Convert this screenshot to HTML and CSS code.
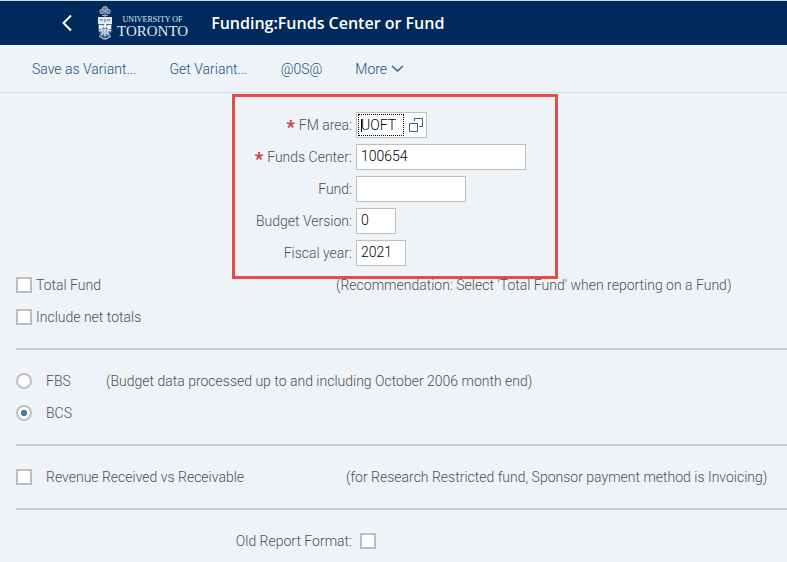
FILE: index.html
```html
<!DOCTYPE html>
<html lang="en">
<head>
<meta charset="utf-8">
<title>Funding:Funds Center or Fund</title>
<link rel="stylesheet" href="styles.css">
</head>
<body>
<header class="shell">
  <button class="back" type="button" aria-label="Back">
    <svg width="10" height="16" viewBox="0 0 10 16"><path d="M9 .5 1.500 8 9 15.500" fill="none" stroke="#fff" stroke-width="2"/></svg>
  </button>
  <a class="logo" href="#">
    <svg class="crest" width="16" height="34" viewBox="0 0 16 34">
      <g fill="#5d7ba0" stroke="#9fb2cb" stroke-width="1">
        <circle cx="8" cy="3" r="2.500"/><circle cx="5" cy="5.500" r="2.200"/><circle cx="11" cy="5.500" r="2.200"/>
        <path d="M8 4v7M5 9.500h6"/>
      </g>
      <path d="M1 11h14v7H1z" fill="#dfe7f0"/>
      <path d="M3 13h3v2H3zM10 13h3v2h-3zM7 13h2v3H7z" fill="#8ba2bf"/>
      <path d="M1 18h14v4c0 5-3 8-7 10-4-2-7-5-7-10z" fill="#4a6a92"/>
      <path d="M2 19h3l2 2-2 2H2zM14 19h-3l-2 2 2 2h3zM8 17l2 3-2 3-2-3z" fill="#eef3f8"/>
      <path d="M2 25l3-1 1 3-2 2M14 25l-3-1-1 3 2 2M6 24h4M8 24v6" fill="none" stroke="#dfe7f0" stroke-width="1.500"/>
      <path d="M2 30c2 0 3 3 6 3s4-3 6-3" fill="none" stroke="#b4c3d6" stroke-width="1.500"/>
    </svg>
    <span class="wordmark"><span class="small">UNIVERSITY OF</span><span class="large">TORONTO</span></span>
  </a>
  <h1>Funding:Funds Center or Fund</h1>
</header>
<nav class="toolbar">
  <button type="button">Save as Variant...</button>
  <button type="button">Get Variant...</button>
  <button type="button">@0S@</button>
  <button type="button">More
    <svg width="13" height="8" viewBox="0 0 13 8"><path d="M1 1l5.500 5L12 1" fill="none" stroke="#346187" stroke-width="1.500"/></svg>
  </button>
</nav>
<main>
  <form>
    <section class="fields">
      <div class="field"><label for="area"><b>*</b>FM area:</label>
        <span class="lookup"><input id="area" type="text" value="UOFT">
          <button type="button" aria-label="Value help"><svg width="16" height="16" viewBox="0 0 16 16"><g fill="none" stroke="#346187"><path d="M6.500 4.500v-3h8v8h-3"/><path d="M1.500 6.500h8v8h-8z"/></g></svg></button></span></div>
      <div class="field"><label for="center"><b>*</b>Funds Center:</label><input class="wide" id="center" type="text" value="100654"></div>
      <div class="field"><label for="fund">Fund:</label><input class="medium" id="fund" type="text"></div>
      <div class="field"><label for="version">Budget Version:</label><input class="tiny" id="version" type="text" value="0"></div>
      <div class="field"><label for="year">Fiscal year:</label><input class="short" id="year" type="text" value="2021"></div>
    </section>
    <div class="option tight"><input type="checkbox" id="total"><label for="total">Total Fund</label><span>(Recommendation: Select 'Total Fund' when reporting on a Fund)</span></div>
    <div class="option tight"><input type="checkbox" id="net"><label for="net">Include net totals</label></div>
    <hr>
    <div class="option source"><input type="radio" name="source" id="fbs"><label for="fbs">FBS</label><span>(Budget data processed up to and including October 2006 month end)</span></div>
    <div class="option source"><input type="radio" name="source" id="bcs" checked><label for="bcs">BCS</label></div>
    <hr>
    <div class="option"><input type="checkbox" id="revenue"><label for="revenue">Revenue Received vs Receivable</label><span>(for Research Restricted fund, Sponsor payment method is Invoicing)</span></div>
    <hr>
    <div class="format"><label for="old">Old Report Format:</label><input type="checkbox" id="old"></div>
  </form>
</main>
</body>
</html>
```
FILE: styles.css
```css
* { box-sizing: border-box; }
body {
  margin: 0;
  min-height: 100vh;
  background: #eef3f8;
  color: #505050;
  font: 300 14px/20px Roboto, "Liberation Sans", sans-serif;
}
button, input { margin: 0; font: inherit; }
button { padding: 0; border: 0; background: none; cursor: pointer; }
svg { display: block; }

.shell {
  display: flex;
  align-items: center;
  height: 45px;
  padding-left: 62px;
  border-top: 1px solid #d3d9dd;
  background: #002a5c;
  color: #fff;
}
.logo {
  display: flex;
  align-items: center;
  gap: 4px;
  margin: 0 23px 0 25px;
  color: #dfe7f0;
  text-decoration: none;
}
.wordmark {
  display: flex;
  flex-direction: column;
  align-items: center;
  padding-top: 8px;
  font-family: "Liberation Serif", serif;
  font-weight: 400;
}
.small { font-size: 8px; line-height: 8px; }
.large { font-size: 15px; line-height: 14px; }
h1 { margin: 0; font: 600 16px/20px "Open Sans", sans-serif; }

.toolbar {
  display: flex;
  align-items: center;
  gap: 33px;
  height: 48px;
  padding-left: 32px;
  border-bottom: 1px solid #cfe0f0;
}
.toolbar button {
  display: flex;
  align-items: center;
  gap: 4px;
  color: #20527c;
}

main { padding: 16px 0 5px 16px; }
.fields {
  position: relative;
  width: 326px;
  margin-left: 216px;
}
.fields::after {
  content: "";
  position: absolute;
  inset: -15px 0 -10px;
  border: 3px solid #e84a45;
  pointer-events: none;
}
.field {
  display: grid;
  grid-template-columns: 120px auto;
  align-items: center;
  justify-content: start;
  gap: 4px;
  height: 32px;
}
.field label { text-align: right; white-space: nowrap; }
.field b { margin-right: 4px; color: #c14646; font-weight: 900; font-size: 18px; line-height: 16px; vertical-align: -3px; }
input[type="text"] {
  height: 26px;
  padding: 0 4px 2px;
  border: 1px solid #bfbfbf;
  background: #fff;
  color: #000;
  outline: 0;
}
.wide { width: 170px; }
.medium { width: 110px; }
.short { width: 50px; }
.tiny { width: 40px; }
.lookup {
  display: flex;
  align-items: center;
  gap: 4px;
  width: 71px;
  height: 26px;
  padding-left: 1px;
  border: 1px solid #bfbfbf;
  background: #fff;
}
.lookup input[type="text"] {
  width: 46px;
  height: 22px;
  padding: 0 2px;
  border: 1px dotted #000;
  /* text caret at the start of the focused field */
  background: linear-gradient(#000, #000) 2px 4px / 1px 13px no-repeat #fff;
}

.option {
  display: grid;
  grid-template-columns: 16px 290px auto;
  align-items: center;
  justify-content: start;
  column-gap: 14px;
  height: 32px;
  white-space: nowrap;
}
.option span { margin-left: -4px; }
.tight { column-gap: 4px; }
.tight span { margin-left: 6px; }
.source { grid-template-columns: 16px 50px auto; }
input[type="checkbox"], input[type="radio"] {
  appearance: none;
  width: 16px;
  height: 16px;
  border: 2px solid #bfbfbf;
  background: #fff;
}
input[type="radio"] { border-radius: 50%; }
input[type="radio"]:checked { background: radial-gradient(circle, #427cac 3px, #fff 3px); }

hr {
  height: 2px;
  margin: 15px 0;
  border: 0;
  background: #cacaca;
}
.format {
  display: grid;
  grid-template-columns: 336px 16px;
  align-items: center;
  gap: 8px;
  height: 32px;
}
.format label { text-align: right; }
```
